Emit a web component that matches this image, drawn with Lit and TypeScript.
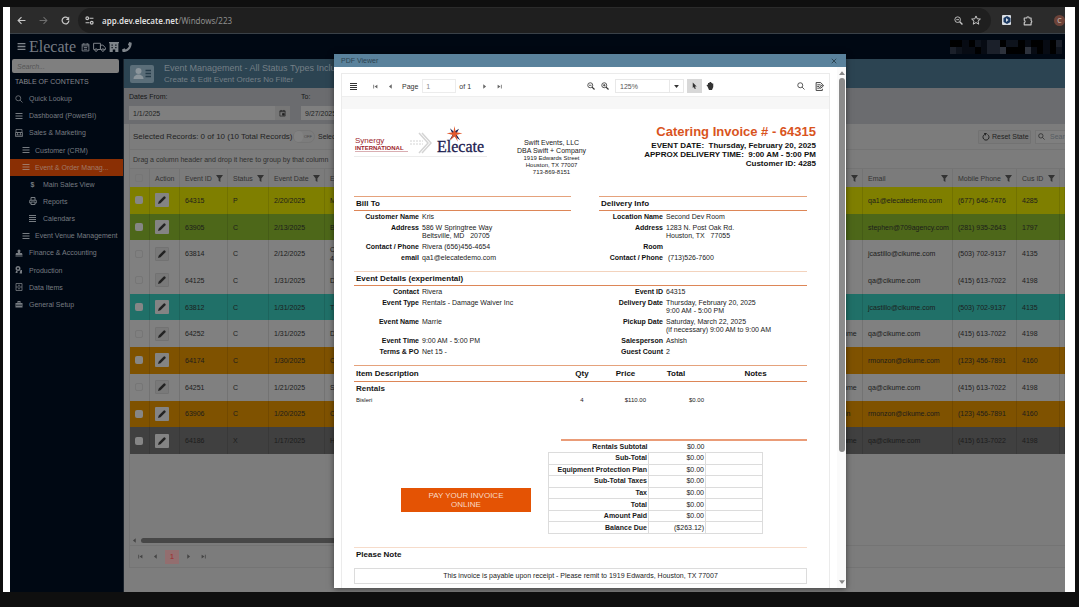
import { LitElement, html, css, svg, nothing } from "lit";
import { customElement } from "lit/decorators.js";
import { classMap } from "lit/directives/class-map.js";

const stroke = (w: number, h: number, body: unknown, sw = 1.6, box = "0 0 16 16") =>
  html`<svg width=${w} height=${h} viewBox=${box} fill="none" stroke="currentColor" stroke-width=${sw} aria-hidden="true">${body}</svg>`;
const solid = (w: number, h: number, body: unknown, box = "0 0 16 16") =>
  html`<svg width=${w} height=${h} viewBox=${box} fill="currentColor" aria-hidden="true">${body}</svg>`;

const icons = {
  menu: (s = 8) => stroke(s, s, svg`<path d="M1 3h14M1 8h14M1 13h14" stroke-width="2.4"/>`),
  bars4: () => solid(7, 7, svg`<path d="M0 0h7v1H0zM0 2h7v1H0zM0 4h7v1H0zM0 6h7v1H0z"/>`, "0 0 7 7"),
  search: (s = 8) => stroke(s, s, svg`<circle cx="6.5" cy="6.5" r="5"/><path d="M10.2 10.2L15 15"/>`),
  zoomOut: (s = 9) => stroke(s, s, svg`<circle cx="6.5" cy="6.5" r="5"/><path d="M10.2 10.2L15 15" stroke-width="2.4"/><path d="M4 6.5h5"/>`),
  zoomIn: (s = 9) => stroke(s, s, svg`<circle cx="6.5" cy="6.5" r="5"/><path d="M10.2 10.2L15 15" stroke-width="2.4"/><path d="M4 6.5h5M6.5 4v5"/>`),
  back: () => stroke(9, 9, svg`<path d="M15 8H2M8 2L2 8l6 6" stroke-width="2"/>`),
  forward: () => stroke(9, 9, svg`<path d="M1 8h13M8 2l6 6-6 6" stroke-width="1.8"/>`),
  reload: () => stroke(9, 9, svg`<path d="M14 8a6 6 0 1 1-2-4.5" stroke-width="2.2"/><path d="M14.5 1v6h-6z" fill="currentColor" stroke="none"/>`),
  tune: () => stroke(9, 9, svg`<circle cx="4" cy="4" r="2.4"/><path d="M8 4h7M1 12h7"/><circle cx="12" cy="12" r="2.4"/>`, 2),
  star: () => stroke(10, 10, svg`<path d="M8 1.5l2 4.6 5 .4-3.800 3.300 1.200 4.900L8 12.100 3.600 14.700l1.200-4.900L1 6.500l5-.4z" stroke-linejoin="round"/>`),
  puzzle: () => stroke(11, 11, svg`<path d="M2 4h4a2 2 0 0 1 4 0h3v4a2 2 0 0 1 0 3.600V15H2v-3.500a2 2 0 0 0 0-3.800z" stroke-linejoin="round"/>`, 1.9),
  calendar: () => stroke(9, 10, svg`<path d="M2 3h12v12H2zM2 6h12M5 1v3M11 1v3M5 9h6M5 12h6"/>`),
  truck: () => stroke(13, 10, svg`<path d="M1 2h11v10H1zM12 5h4l4 4v3h-8z"/><circle cx="5" cy="13" r="2" fill="#000813"/><circle cx="16" cy="13" r="2" fill="#000813"/>`, 1.6, "0 0 21 16"),
  building: () => solid(10, 10, svg`<path fill-rule="evenodd" d="M0 0h16v2h-1v14h-5v-4H6v4H1V2H0zM4 4v2h2V4zM10 4v2h2V4zM4 8v2h2V8zM10 8v2h2V8z"/>`),
  phone: () => solid(10, 10, svg`<path d="M11.500 0l4 1c.4 9-6 15-14.500 15L0 12l4-2.200 2 2c2.500-1.200 4.300-3 5.400-5.500L9.500 4.500z"/>`),
  card: () => html`<svg width="20" height="13" viewBox="0 0 40 26" aria-hidden="true"><circle cx="13" cy="8" r="6" fill="#8b959b"/><path d="M3 24c0-12 20-12 20 0z" fill="#8b959b"/><path d="M27 7h11M27 13h11M27 19h11" stroke="#253b48" stroke-width="3"/></svg>`,
  store: () => stroke(8, 8, svg`<path d="M2 1h12v6H2zM1 7h14v8H1zM5 7v5M11 7v5M1 12h14"/>`),
  printer: () => stroke(8, 8, svg`<path d="M4 6V1h8v5M4 12H1.500V6.500h13V12H12M4 10h8v5H4z"/>`, 2),
  stamp: () => solid(8, 8, svg`<path d="M5 4a3 3 0 0 1 6 0L10 8h4l1 4H1l1-4h4zM1 13h14v2H1z"/>`),
  gears: () => solid(8, 8, svg`<path fill-rule="evenodd" d="M6 0a5 5 0 1 1 0 10A5 5 0 0 1 6 0zm0 3a2 2 0 1 0 0 4 2 2 0 0 0 0-4zM2 10h3v4H1zM11 8h3v7h-5z"/>`),
  cabinet: () => stroke(8, 8, svg`<path d="M2 1h12v14H2zM2 8h12M6 4.500h4M6 11.500h4"/>`),
  bank: () => solid(8, 8, svg`<path fill-rule="evenodd" d="M5 2h6v4h4v9H1V6h4zM7 4v2h2V4zM3 9v3h2V9zM7 9v3h2V9zM11 9v3h2V9z"/>`),
  dollar: () => html`<b>$</b>`,
  filter: () => solid(7, 7, svg`<path d="M0 0h16l-6 8v8l-4-3V8z"/>`),
  pencil: () => solid(8, 8, svg`<path d="M0 16l1.500-5L11 1.500a2 2 0 0 1 3.500 3.500L5 14.500z"/>`),
  date: () => stroke(7, 8, svg`<path d="M2 3h12v12H2zM2 5h12M5 1v3M11 1v3" /><path d="M8 9h4v4H8z" fill="currentColor"/>`),
  refresh: () => stroke(8, 8, svg`<path d="M5 3a6 6 0 1 0 6 0" stroke-width="2"/><path d="M4 0h6L6 6z" fill="currentColor" stroke="none"/>`),
  first: () => solid(5, 5, svg`<path d="M1 2h2.500v12H1zM14 2v12L5 8z"/>`),
  prev: () => solid(5, 5, svg`<path d="M12 1v14L3 8z"/>`),
  next: () => solid(5, 5, svg`<path d="M4 1v14l9-7z"/>`),
  last: () => solid(5, 5, svg`<path d="M12.500 2H15v12h-2.500zM2 2v12l9-6z"/>`),
  up: () => solid(6, 4, svg`<path d="M0 10L8 0l8 10z"/>`, "0 0 16 10"),
  down: () => solid(6, 4, svg`<path d="M0 0l8 10 8-10z"/>`, "0 0 16 10"),
  cursor: () => solid(7, 8, svg`<path d="M4 0l9 9H9l2 5-2.500 1L6.500 10 4 12.500z"/>`),
  hand: () => solid(8, 8, svg`<path d="M3 9L1 6.500 2.500 5 4 6V2h2v-1h2V0h2v1.500h2V3h2.500v7L12 16H6z"/>`),
  notes: () => stroke(9, 9, svg`<path d="M13 5V4l-3-3H2v14h11v-3M4 5h6M4 8h3M4 11h3M8 11l1-3 5-3 1 2-5 4z"/>`),
};

type MenuItem = [string, keyof typeof icons, number, boolean?];
const menuItems: MenuItem[] = [
  ["Quick Lookup", "search", 0],
  ["Dashboard (PowerBI)", "menu", 0],
  ["Sales & Marketing", "store", 0],
  ["Customer (CRM)", "menu", 1],
  ["Event & Order Manag...", "menu", 1, true],
  ["Main Sales View", "dollar", 2],
  ["Reports", "printer", 2],
  ["Calendars", "bars4", 2],
  ["Event Venue Management", "menu", 1],
  ["Finance & Accounting", "stamp", 0],
  ["Production", "gears", 0],
  ["Data Items", "cabinet", 0],
  ["General Setup", "bank", 0],
];

const records = [
  ["yellow", "64315", "P", "2/20/2025", "M", "", "qa1@elecatedemo.com", "(677) 646-7476", "4285"],
  ["green", "63905", "C", "2/13/2025", "B", "", "stephen@709agency.com", "(281) 935-2643", "1797"],
  ["plain", "63814", "C", "2/12/2025", "C 4", "", "jcastillo@cikume.com", "(503) 702-9137", "4135"],
  ["plain", "64125", "C", "1/31/2025", "D", "", "qa@cikume.com", "(415) 613-7022", "4198"],
  ["teal", "63812", "C", "1/31/2025", "T", "", "jcastillo@cikume.com", "(503) 702-9137", "4135"],
  ["plain", "64252", "C", "1/31/2025", "D", "Cikume", "qa@cikume.com", "(415) 613-7022", "4198"],
  ["orange", "64174", "C", "1/30/2025", "C", "", "rmonzon@cikume.com", "(123) 456-7891", "4160"],
  ["plain", "64251", "C", "1/21/2025", "S", "Cikume", "qa@cikume.com", "(415) 613-7022", "4198"],
  ["orange", "63906", "C", "1/20/2025", "C", "Kevin", "rmonzon@cikume.com", "(123) 456-7891", "4160"],
  ["grey", "64186", "X", "1/17/2025", "H", "Cikume", "qa@cikume.com", "(415) 613-7022", "4198"],
];

@customElement("browser-bar")
class BrowserBar extends LitElement {
  static styles = css`
    :host { display: flex; align-items: center; height: 27px; background: #2b2b2b; color: #c7c7c7; border-bottom: 1px solid #3a4148; box-sizing: border-box; font: 8px "Noto Sans", sans-serif; overflow: hidden; flex: none; }
    button { all: unset; display: flex; }
    svg { display: block; }
    .nav { display: flex; gap: 13px; width: 58px; padding-left: 7px; }
    .fwd { color: #6f6f6f; }
    .address { flex: 1; display: flex; align-items: center; gap: 8px; height: 25px; border-radius: 13px; background: #1f1f1f; padding: 0 10px 0 7px; margin-left: 3px; }
    .url { flex: 1; color: #8e8e8e; }
    .url b { color: #dedede; font-weight: 600; }
    .tools { display: flex; gap: 12px; align-items: center; padding-left: 11px; width: 63px; flex: none; }
    .ext { width: 10px; height: 10px; background: #d8dde2; border-radius: 1px; display: grid; place-items: center; }
    .profile { width: 11px; height: 11px; border-radius: 6px; background: #6d4339; color: #d2c3be; font-size: 7px; line-height: 11px; text-align: center; margin-left: 9px; flex: none; }
  `;
  render() {
    return html`
      <div class="nav">
        <button aria-label="Back">${icons.back()}</button>
        <button class="fwd" aria-label="Forward">${icons.forward()}</button>
        <button aria-label="Reload">${icons.reload()}</button>
      </div>
      <div class="address">
        ${icons.tune()}<span class="url"><b>app.dev.elecate.net</b>/Windows/223</span>
        ${icons.zoomOut()}${icons.star()}
      </div>
      <div class="tools">
        <span class="ext">${solid(8, 8, svg`<path d="M8 0l7 4v8l-7 4-7-4V4z" fill="#1c3a63"/><path d="M6 4l5 4-5 4z" fill="#d8dde2"/>`)}</span>
        ${icons.puzzle()}
        <span class="profile">C</span>
      </div>`;
  }
}

@customElement("site-header")
class SiteHeader extends LitElement {
  static styles = css`
    :host { display: flex; align-items: center; height: 25px; background: #000813; color: #7f858b; padding: 0 3px 0 7px; flex: none; box-sizing: border-box; }
    a { color: inherit; display: flex; text-decoration: none; }
    .brand { font: 16px/25px "Liberation Serif", serif; color: #767c84; margin: 0 5px 0 3px; }
    .links { display: flex; gap: 3px; align-items: center; flex: 1; }
    .masked { display: grid; grid-template-columns: repeat(18, 1fr); grid-auto-rows: 7px; width: 112px; }
    .m0 { background: #000; } .m1 { background: #070b13; } .m2 { background: #0e131c; }
    .m3 { background: #1b202a; } .m4 { background: #2d323c; }
  `;
  render() {
    const shades = "001021330220100103" + "321101334000410102";
    return html`
      <a href="#" aria-label="Menu">${icons.menu(9)}</a>
      <a class="brand" href="#">Elecate</a>
      <nav class="links">
        <a href="#" aria-label="Calendar">${icons.calendar()}</a>
        <a href="#" aria-label="Deliveries">${icons.truck()}</a>
        <a href="#" aria-label="Venues">${icons.building()}</a>
        <a href="#" aria-label="Calls">${icons.phone()}</a>
      </nav>
      <div class="masked">${[...shades].map((s) => html`<span class=${"m" + s}></span>`)}</div>`;
  }
}

@customElement("side-menu")
class SideMenu extends LitElement {
  static styles = css`
    :host { display: block; width: 114px; flex: none; background: #000813; color: #777c82; font: 7px/9px "Liberation Sans", sans-serif; box-sizing: border-box; border-right: 1px solid #1a222b; }
    input { display: block; width: 107px; height: 14px; margin: 0 0 0 2px; border: 0; border-radius: 2px; background: #7f7f7f; padding: 0 5px; box-sizing: border-box; font: italic 7px "Liberation Sans", sans-serif; }
    input::placeholder { color: #555; opacity: 1; }
    h2 { font: 7px/17px "Liberation Sans", sans-serif; margin: 0 0 0 5px; color: #85898e; }
    ul { list-style: none; margin: 0; padding: 0; display: grid; grid-auto-rows: 1fr; height: 223px; }
    a { display: flex; align-items: center; gap: 7px; height: 100%; padding-left: 5px; color: inherit; text-decoration: none; white-space: nowrap; }
    .d1 a { padding-left: 12px; gap: 6px; }
    .d2 a { padding-left: 19px; }
    .active { background: #8a2f04; color: #a07a68; }
    .icon { width: 7px; display: flex; justify-content: center; }
    svg { flex: none; }
  `;
  render() {
    return html`
      <input type="search" placeholder="Search..." aria-label="Search menu" />
      <h2>TABLE OF CONTENTS</h2>
      <ul>${menuItems.map(([label, icon, depth, active]) => html`
        <li class=${classMap({ ["d" + depth]: true, active: !!active })}>
          <a href="#"><span class="icon">${(icons[icon] as () => unknown)()}</span>${label}</a>
        </li>`)}</ul>`;
  }
}

@customElement("event-grid")
class EventGrid extends LitElement {
  static styles = css`
    :host { display: flex; flex-direction: column; flex: 1; min-width: 0; background: #7d7d7d; color: #222; font: 7px/9px "Liberation Sans", sans-serif; }
    button { all: unset; box-sizing: border-box; }
    svg { display: block; flex: none; }
    .title { display: flex; align-items: center; height: 29px; background: #2c4452; color: #747f86; gap: 10px; padding-left: 6px; flex: none; }
    .badge { width: 24px; height: 18px; border-radius: 2px; background: #5b6e79; display: grid; place-items: center; }
    h1 { font: 9px/12px "Liberation Sans", sans-serif; margin: 0; }
    .title p { font-size: 8px; line-height: 12px; margin: 0; }
    .dates { display: flex; gap: 11px; background: #6b6c6f; height: 36px; padding: 4px 5px 0; box-sizing: border-box; flex: none; }
    .field { width: 161px; flex: none; }
    .field label { display: block; line-height: 10px; margin-bottom: 4px; color: #161616; }
    .entry { display: flex; }
    .entry input { flex: 1; min-width: 0; height: 14px; box-sizing: border-box; border: 0; background: #7f7f7f; padding: 0 4px; font: 7px "Liberation Sans", sans-serif; color: #222; }
    .entry button { width: 15px; height: 14px; background: #777; display: grid; place-items: center; }
    .panel { margin-left: 5px; border-left: 1px solid #747474; display: flex; flex-direction: column; height: 444px; background: #7c7c7c; border-bottom: 1px solid #747474; box-sizing: border-box; overflow: hidden; }
    .tools { display: flex; align-items: center; height: 26px; border-bottom: 1px solid #747474; padding-left: 3px; font-size: 7px; flex: none; box-sizing: border-box; }
    .count { font-size: 8px; width: 160px; white-space: nowrap; }
    .switch { display: flex; align-items: center; gap: 3px; flex: 1; }
    .toggle { width: 22px; height: 13px; border-radius: 7px; border: 1px solid #757575; font-size: 4px; color: #444; display: flex; align-items: center; justify-content: flex-end; padding-right: 2px; }
    .toggle::before { content: ""; width: 9px; height: 11px; border-radius: 6px; background: #828282; margin-right: auto; }
    .reset { display: flex; align-items: center; gap: 2px; width: 53px; height: 14px; border: 1px solid #727272; border-radius: 1px; background: #797979; padding: 0 3px; margin-right: 4px; white-space: nowrap; }
    .find { display: flex; align-items: center; width: 30px; height: 14px; background: #7f7f7f; border: 1px solid #747474; border-right: 0; box-sizing: border-box; padding-left: 2px; gap: 5px; overflow: hidden; }
    .find input { width: 40px; border: 0; padding: 0; background: none; font: 7px "Liberation Sans", sans-serif; flex: none; }
    .find input::placeholder { color: #565c62; opacity: 1; }
    .group { height: 19px; line-height: 19px; padding-left: 3px; border-bottom: 1px solid #747474; box-sizing: border-box; flex: none; color: #303030; }
    table { width: 100%; height: 285px; table-layout: fixed; border-collapse: separate; border-spacing: 0; background: #808080; flex: none; }
    th { height: 18px; padding: 0 4px 0 5px; font-weight: 400; text-align: left; background: #7b7b7b; border-right: 1px solid #737373; box-sizing: border-box; color: #333; white-space: nowrap; }
    th div { display: flex; align-items: center; justify-content: space-between; }
    td { padding: 0 0 0 5px; border-right: 1px solid rgba(0, 0, 0, 0.1); height: 18px; white-space: nowrap; color: #1c1c1c; line-height: 9px; }
    .c-check { width: 20px; } .c-action { width: 30px; } .c-id { width: 48px; } .c-status { width: 41px; }
    .c-date { width: 56px; } .c-who { width: 35px; } .c-mail { width: 90px; } .c-phone { width: 64px; } .c-cus { width: 43px; } .c-more { width: 5px; }
    .two { white-space: normal; width: 6px; display: block; }
    .yellow { background: #7f7f00; } .green { background: #4d6719; } .teal { background: #207068; }
    .orange { background: #7f5200; } .grey { background: #404040; }
    .tick { appearance: none; display: block; width: 8px; height: 8px; margin: 0; border-radius: 2px; background: #868686; }
    .plain .tick, th .tick { background: none; border: 1px solid #767676; }
    .edit { display: grid; place-items: center; width: 14px; height: 14px; border-radius: 1px; background: #848484; color: #222; }
    .plain .edit { background: #797979; border: 1px solid #727272; }
    .space { flex: 1; }
    .hscroll { display: flex; align-items: center; gap: 4px; height: 10px; padding-left: 2px; color: #444; flex: none; }
    .thumb { width: 60%; height: 5px; border-radius: 3px; background: #474747; }
    .pager { display: flex; align-items: center; gap: 10px; height: 22px; border-top: 1px solid #747474; padding-left: 8px; color: #444; box-sizing: border-box; flex: none; }
    .pager .page { width: 14px; height: 14px; margin: 0 -3px; background: #936e6f; color: #a02a2e; text-align: center; line-height: 14px; font-size: 8px; }
  `;
  head(label: string) {
    return html`<th scope="col"><div>${label}${icons.filter()}</div></th>`;
  }
  render() {
    return html`
      <header class="title">
        <span class="badge">${icons.card()}</span>
        <div><h1>Event Management - All Status Types Included</h1><p>Create &amp; Edit Event Orders No Filter</p></div>
      </header>
      <div class="dates">
        ${[["from", "Dates From:", "1/1/2025"], ["to", "To:", "9/27/2025"]].map(([id, label, value]) => html`
          <div class="field"><label for=${id}>${label}</label>
            <div class="entry"><input id=${id} .value=${value} /><button aria-label="Open calendar">${icons.date()}</button></div>
          </div>`)}
      </div>
      <section class="panel">
        <div class="tools">
          <span class="count">Selected Records: 0 of 10 (10 Total Records)</span>
          <span class="switch"><button class="toggle" role="switch" aria-checked="false" aria-label="Selected only">OFF</button>Selected</span>
          <button class="reset">${icons.refresh()}Reset State</button>
          <label class="find">${icons.search(7)}<input placeholder="Search..." aria-label="Search records" /></label>
        </div>
        <div class="group">Drag a column header and drop it here to group by that column</div>
        <table>
          <colgroup><col class="c-check"><col class="c-action"><col class="c-id"><col class="c-status"><col class="c-date"><col><col class="c-who"><col class="c-mail"><col class="c-phone"><col class="c-cus"><col class="c-more"></colgroup>
          <thead><tr>
            <th><input class="tick" type="checkbox" aria-label="Select all" /></th>
            <th scope="col">Action</th>
            ${this.head("Event ID")}${this.head("Status")}${this.head("Event Date")}
            <th scope="col">E</th><th scope="col"><div><span></span>${icons.filter()}</div></th>${this.head("Email")}${this.head("Mobile Phone")}${this.head("Cus ID")}<th></th>
          </tr></thead>
          <tbody>${records.map(([tone, id, status, date, name, who, mail, phone, cus]) => html`
            <tr class=${tone}>
              <td><input class="tick" type="checkbox" aria-label=${"Select " + id} /></td>
              <td><button class="edit" aria-label=${"Edit " + id}>${icons.pencil()}</button></td>
              <td>${id}</td><td>${status}</td><td>${date}</td>
              <td>${name ? html`<span class="two">${name}</span>` : nothing}</td>
              <td>${who}</td><td>${mail}</td><td>${phone}</td><td>${cus}</td><td></td>
            </tr>`)}</tbody>
        </table>
        <div class="space"></div>
        <div class="hscroll">${icons.prev()}<span class="thumb"></span></div>
        <nav class="pager" aria-label="Pages">
          <button aria-label="First page">${icons.first()}</button>
          <button aria-label="Previous page">${icons.prev()}</button>
          <button class="page">1</button>
          <button aria-label="Next page">${icons.next()}</button>
          <button aria-label="Last page">${icons.last()}</button>
        </nav>
      </section>`;
  }
}

@customElement("invoice-page")
class InvoicePage extends LitElement {
  static styles = css`
    :host { display: block; padding: 15px 22px 0 12px; color: #1a1a1a; font: 7px/8px "Liberation Sans", sans-serif; }
    .top { display: flex; height: 72px; margin-right: -9px; }
    .logos { display: flex; align-items: center; height: 32px; width: 133px; border-bottom: 1px solid #ececec; margin-bottom: auto; }
    .synergy { color: #9c1c2b; width: 54px; padding: 8px 0 0 1px; box-sizing: border-box; line-height: 8px; font-size: 8px; white-space: nowrap; }
    .synergy b { display: block; font-size: 6px; line-height: 6px; border-bottom: 1px solid #d9aeb2; }
    .chevrons { margin: 6px 5px 0 2px; }
    .elecate { flex: 1; display: grid; color: #1d2150; font: 16px/16px "Liberation Serif", serif; }
    .elecate > * { grid-area: 1 / 1; }
    .elecate span { padding-top: 13px; -webkit-text-stroke: 0.3px #1d2150; }
    .elecate svg { margin: 0 0 0 9px; }
    address { font-style: normal; text-align: center; padding-top: 15px; margin: 0 auto 0 30px; }
    .small { font-size: 6px; line-height: 7px; }
    .summary { text-align: right; font-weight: 700; font-size: 8px; line-height: 9px; white-space: pre; color: #111; }
    h1 { font-size: 13px; line-height: 15px; margin: 0 0 2px; color: #d9541e; }
    h2 { font-size: 8px; line-height: 13px; margin: 0; padding-left: 2px; border-top: 1px solid #e5a27c; border-bottom: 1px solid #dd8657; color: #111; }
    .heads, dl { display: grid; grid-template-columns: 65px 1fr 64px 141px; column-gap: 3px; }
    .heads h2 { grid-column: span 2; }
    .heads h2:first-child { margin-right: 25px; }
    dl { margin: 0 0 9px; padding-top: 2px; row-gap: 3px; }
    dt { font-weight: 700; text-align: right; color: #111; white-space: nowrap; }
    dd { margin: 0; white-space: pre; }
    .details { border-top-color: #f3d3bd; }
    .items { width: 100%; border-collapse: collapse; table-layout: fixed; }
    .items th { font-size: 8px; line-height: 15px; padding: 0; border-top: 1px solid #e5a27c; border-bottom: 1px solid #dd8657; color: #111; }
    .items th:first-child { text-align: left; padding-left: 2px; }
    .items td { font-size: 6px; line-height: 11px; padding: 0; text-align: right; }
    .items td:first-child { text-align: left; padding-left: 2px; }
    .items .q { width: 42px; } .items .p { width: 45px; } .items .t { width: 56px; } .items .n { width: 103px; }
    .items .cat { font-size: 8px; line-height: 13px; font-weight: 700; }
    .items .mid { text-align: center; }
    .items .price { padding-right: 2px; }
    .bottom { display: flex; justify-content: space-between; align-items: flex-start; margin-top: 33px; height: 108px; }
    .pay { display: block; width: 130px; height: 24px; margin: 49px 0 0 47px; box-sizing: border-box; padding: 3px 25px; background: #e45304; color: #f8d9c6; text-align: center; font-size: 8px; line-height: 9px; text-decoration: none; }
    .sums { width: 259px; }
    .rule { border-top: 2px solid #ea9c78; margin-left: 13px; }
    .totals { border-collapse: collapse; width: 215px; height: 93px; table-layout: fixed; }
    .totals th, .totals td { border: 1px solid #dcdcdc; text-align: right; padding: 0 1px; height: 11px; line-height: 8px; box-sizing: border-box; }
    .totals tr:first-child > * { border: 0; }
    .totals tr:nth-child(2) > * { border-top: 1px solid #dcdcdc; }
    .totals .a { width: 100px; } .totals .b { width: 57px; }
    .note { border-top: 1px solid #f6dccb; border-bottom: 0; }
    .terms { border: 1px solid #dcdcdc; height: 16px; line-height: 14px; box-sizing: border-box; text-align: center; margin: 7px 0 0; }
  `;
  pair(label: string, value: string) {
    return html`<dt>${label}</dt><dd>${value}</dd>`;
  }
  render() {
    const totals = [["Rentals Subtotal", "$0.00"], ["Sub-Total", "$0.00"], ["Equipment Protection Plan", "$0.00"], ["Sub-Total Taxes", "$0.00"], ["Tax", "$0.00"], ["Total", "$0.00"], ["Amount Paid", "$0.00"], ["Balance Due", "($263.12)"]];
    return html`
      <header class="top">
        <div class="logos">
          <div class="synergy">Synergy<b>INTERNATIONAL</b></div>
          <svg class="chevrons" width="22" height="22" viewBox="0 0 22 22" fill="none" stroke="#d4d4d4" aria-hidden="true"><path d="M0 9h13M0 12h13" stroke-dasharray="2 1"/><path d="M9 1l9 10-9 10M12 1l9 10-9 10" stroke-width="1.500"/></svg>
          <div class="elecate"><span>Elecate</span>
            <svg width="17" height="17" viewBox="0 0 30 30" aria-hidden="true"><path d="M7 4l7 6 9-5-5 9 7 11-10-7-9 7 6-10z" fill="#1d2150"/><path d="M15 0l2 11 12 2-11 3 3 12-6-10-8 8 5-10L1 13l12-2z" fill="#e2582c"/></svg></div>
        </div>
        <address>Swift Events, LLC<br />DBA Swift + Company<div class="small">1919 Edwards Street<br />Houston, TX 77007<br />713-869-8151</div></address>
        <div class="summary"><h1>Catering Invoice # - 64315</h1>EVENT DATE:  Thursday, February 20, 2025
APPROX DELIVERY TIME:  9:00 AM - 5:00 PM
Customer ID: 4285</div>
      </header>
      <div class="heads"><h2>Bill To</h2><h2>Delivery Info</h2></div>
      <dl>
        ${this.pair("Customer Name", "Kris")}${this.pair("Location Name", "Second Dev Room")}
        ${this.pair("Address", "586 W Springtree Way\nBeltsville, MD   20705")}${this.pair("Address", "1283 N. Post Oak Rd.\nHouston, TX   77055")}
        ${this.pair("Contact / Phone", "Rivera (656)456-4654")}${this.pair("Room", "")}
        ${this.pair("email", "qa1@elecatedemo.com")}${this.pair("Contact / Phone", " (713)526-7600")}
      </dl>
      <h2 class="details">Event Details (experimental)</h2>
      <dl>
        ${this.pair("Contact", "Rivera")}${this.pair("Event ID", "64315")}
        ${this.pair("Event Type", "Rentals - Damage Waiver Inc")}${this.pair("Delivery Date", "Thursday, February 20, 2025\n9:00 AM - 5:00 PM")}
        ${this.pair("Event Name", "Marrie")}${this.pair("Pickup Date", "Saturday, March 22, 2025\n(if necessary) 9:00 AM to 9:00 AM")}
        ${this.pair("Event Time", "9:00 AM - 5:00 PM")}${this.pair("Salesperson", "Ashish")}
        ${this.pair("Terms & PO", "Net 15 -")}${this.pair("Guest Count", "2")}
      </dl>
      <table class="items">
        <colgroup><col><col class="q"><col class="p"><col class="t"><col class="n"></colgroup>
        <thead><tr><th scope="col">Item Description</th><th scope="col">Qty</th><th scope="col">Price</th><th scope="col">Total</th><th scope="col">Notes</th></tr></thead>
        <tbody>
          <tr><td class="cat" colspan="5">Rentals</td></tr>
          <tr><td>Bisleri</td><td class="mid">4</td><td class="price">$110.00</td><td>$0.00</td><td></td></tr>
        </tbody>
      </table>
      <div class="bottom">
        <a class="pay" href="#">PAY YOUR INVOICE ONLINE</a>
        <div class="sums"><div class="rule"></div>
          <table class="totals"><colgroup><col class="a"><col class="b"><col></colgroup>
            <tbody>${totals.map(([k, v]) => html`<tr><th scope="row">${k}</th><td>${v}</td><td></td></tr>`)}</tbody>
          </table>
        </div>
      </div>
      <h2 class="note">Please Note</h2>
      <p class="terms">This invoice is payable upon receipt - Please remit to 1919 Edwards, Houston, TX 77007</p>`;
  }
}

@customElement("pdf-viewer")
class PdfViewer extends LitElement {
  static styles = css`
    :host { display: flex; flex-direction: column; background: #fff; box-shadow: 0 1px 6px rgba(0, 0, 0, 0.5); font: 7px "Liberation Sans", sans-serif; color: #333; }
    button { all: unset; display: flex; }
    svg { display: block; flex: none; }
    .bar { display: flex; justify-content: space-between; align-items: center; height: 13px; padding: 0 9px 0 7px; background: #5a829c; color: #2c4350; flex: none; }
    .bar h2 { font: 7px/13px "Liberation Sans", sans-serif; margin: 0; }
    .main { flex: 1; min-height: 0; display: flex; }
    .viewer { flex: 1; min-width: 0; margin: 6px 7px 0; border: 1px solid #ebebeb; border-bottom: 0; overflow: hidden; }
    .toolbar { display: flex; align-items: center; height: 22px; padding: 2px 5px 0 8px; box-sizing: border-box; font-size: 7px; }
    .toolbar label { display: flex; align-items: center; gap: 4px; margin: 0 3px 0 9px; }
    .toolbar input { width: 34px; height: 14px; border: 1px solid #ececec; box-sizing: border-box; padding: 0 3px; font: 7px "Liberation Sans", sans-serif; color: #888; }
    .nav { display: flex; gap: 10px; margin-left: 16px; color: #666; }
    .after { margin-left: 11px; }
    .zoom { display: flex; gap: 6px; margin-left: auto; }
    .scale { display: flex; align-items: center; width: 69px; height: 14px; border: 1px solid #e8e8e8; box-sizing: border-box; margin: 0 3px 0 6px; }
    .scale select { flex: 1; appearance: none; border: 0; background: none; padding: 0 4px; height: 12px; font: 7px "Liberation Sans", sans-serif; color: #555; border-right: 1px solid #e8e8e8; border-radius: 0; }
    .scale svg { margin: 0 4px; width: 5px; height: 3px; }
    .picked { width: 15px; height: 14px; background: #d8d8d8; align-items: center; justify-content: center; margin-right: 4px; }
    .right { display: flex; gap: 10px; margin-left: 83px; }
    .gutter { height: 13px; background: #f7f7f7; border-top: 1px solid #eee; box-sizing: border-box; }
    .scroll { width: 9px; background: #fafafa; display: flex; flex-direction: column; align-items: center; color: #888; padding: 4px 0; box-sizing: border-box; gap: 3px; }
    .thumb { width: 6px; height: 73%; border-radius: 3px; background: #8b8b8b; margin-bottom: auto; }
  `;
  render() {
    return html`
      <div class="bar"><h2>PDF Viewer</h2><button aria-label="Close">${stroke(6, 6, svg`<path d="M2 2l12 12M14 2L2 14" stroke-width="2.500"/>`)}</button></div>
      <div class="main">
        <div class="viewer">
          <div class="toolbar">
            <button aria-label="Toggle menu">${icons.bars4()}</button>
            <span class="nav"><button aria-label="First">${icons.first()}</button><button aria-label="Previous">${icons.prev()}</button></span>
            <label>Page <input .value=${"1"} /></label> of 1
            <span class="nav after"><button aria-label="Next">${icons.next()}</button><button aria-label="Last">${icons.last()}</button></span>
            <span class="zoom"><button aria-label="Zoom out">${icons.zoomOut(8)}</button><button aria-label="Zoom in">${icons.zoomIn(8)}</button></span>
            <span class="scale"><select aria-label="Zoom level"><option>125%</option></select>${icons.down()}</span>
            <button class="picked" aria-label="Select text">${icons.cursor()}</button>
            <button aria-label="Pan">${icons.hand()}</button>
            <span class="right"><button aria-label="Search">${icons.search(8)}</button><button aria-label="Annotations">${icons.notes()}</button></span>
          </div>
          <div class="gutter"></div>
          <invoice-page></invoice-page>
        </div>
        <div class="scroll" aria-hidden="true">${icons.up()}<span class="thumb"></span>${icons.down()}</div>
      </div>`;
  }
}

@customElement("app-root")
class AppRoot extends LitElement {
  static styles = css`
    :host { display: block; height: 100vh; box-sizing: border-box; padding: 7px 4px 15px 3px; background: #0f0f0f; }
    .sheet { height: 100%; box-sizing: border-box; background: #fff; padding: 0 10px 0 7px; }
    .window { position: relative; height: 100%; display: flex; flex-direction: column; overflow: hidden; }
    .content { flex: 1; min-height: 0; display: flex; }
    .dialog { position: absolute; top: 47px; bottom: 4px; left: 324px; right: 219px; }
  `;
  render() {
    return html`<div class="sheet"><div class="window">
      <browser-bar></browser-bar>
      <site-header></site-header>
      <div class="content"><side-menu></side-menu><event-grid></event-grid></div>
      <pdf-viewer class="dialog" role="dialog" aria-label="PDF Viewer"></pdf-viewer>
    </div></div>`;
  }
}
